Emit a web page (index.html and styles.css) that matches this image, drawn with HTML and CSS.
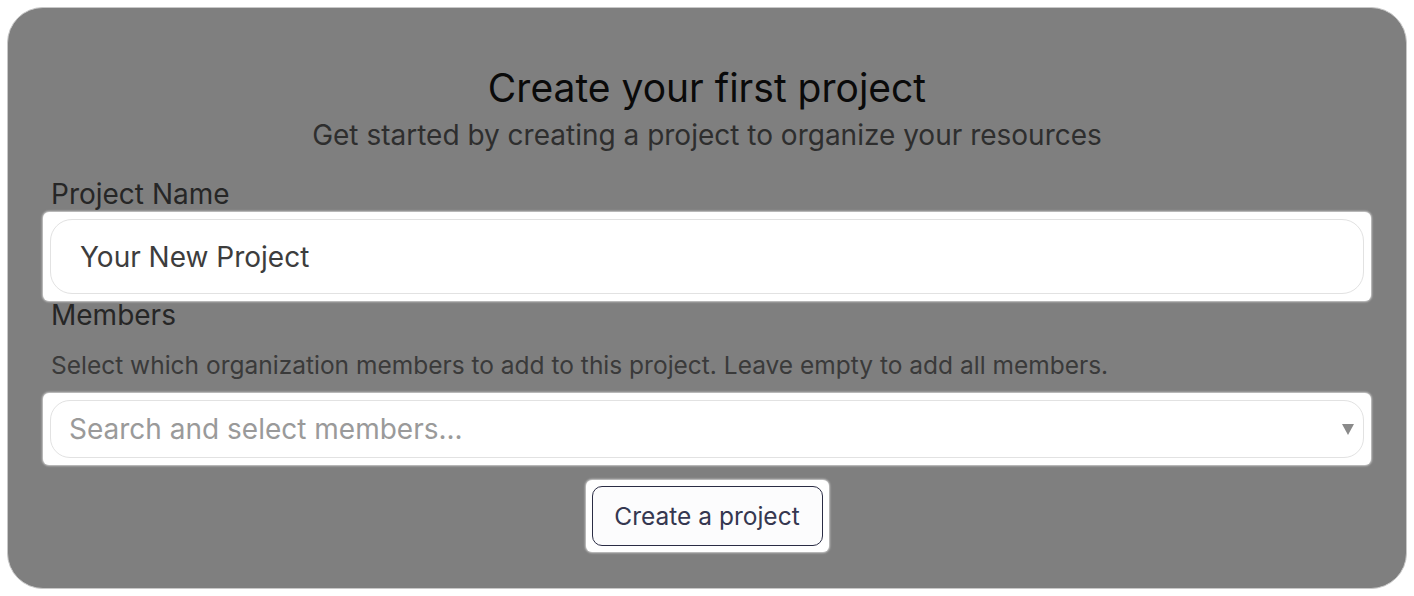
FILE: index.html
```html
<!DOCTYPE html>
<html lang="en">
<head>
<meta charset="utf-8">
<title>Create your first project</title>
<link rel="stylesheet" href="styles.css">
</head>
<body>
<div class="card">
  <div class="head">
    <h1 class="title">Create your first project</h1>
    <p class="subtitle">Get started by creating a project to organize your resources</p>
  </div>
  <div class="form">
    <label class="label">Project Name</label>
    <div class="hl hl-input">
      <div class="input">Your New Project</div>
    </div>
    <label class="label label-members">Members</label>
    <p class="desc">Select which organization members to add to this project. Leave empty to add all members.</p>
    <div class="hl hl-select">
      <div class="select">
        <span class="placeholder">Search and select members...</span>
        <span class="caret"></span>
      </div>
    </div>
    <div class="actions">
      <div class="hl hl-btn">
        <button class="btn">Create a project</button>
      </div>
    </div>
  </div>
</div>
</body>
</html>
```

FILE: styles.css
```css
* { box-sizing: border-box; }
html, body { margin: 0; padding: 0; background: #ffffff; }
body {
  font-family: Inter, "Noto Sans", "Liberation Sans", sans-serif;
  padding: 7px;
  width: 1414px;
  height: 596px;
}
.card {
  width: 1400px;
  height: 582px;
  background: #7f7f7f;
  border: 1px solid #c8c8c8;
  border-radius: 36px;
  padding: 56px 42px 0 42px;
}
.head { text-align: center; }
.title {
  margin: 0;
  font-size: 39px;
  line-height: 48px;
  font-weight: 400;
  color: #0a0a0a;
}
.subtitle {
  margin: 2px 0 0;
  font-size: 28px;
  line-height: 42px;
  color: #2e2e2e;
}
.form {
  display: flex;
  flex-direction: column;
  margin-top: 17px;
}
.label {
  display: block;
  font-size: 28px;
  line-height: 42px;
  color: #262626;
  padding-left: 1px;
}
.hl {
  position: relative;
  z-index: 0;
  background: #ffffff;
  border-radius: 6px;
  padding: 7px;
  margin: -7px;
  box-shadow: 0 0 2px 1px rgba(255,255,255,0.6);
}
.hl-input { margin-top: -3px; }
.input {
  height: 75px;
  border: 1px solid #e2e2e2;
  border-radius: 22px;
  padding: 0 29px;
  display: flex;
  align-items: center;
  font-size: 28px;
  color: #3d3d3d;
}
.label-members { position: relative; z-index: 1; }
.desc {
  margin: 11px 0 0;
  padding-left: 1px;
  font-size: 24.5px;
  line-height: 36.75px;
  color: #3a3a3a;
}
.hl-select { margin-top: 9px; }
.select {
  height: 58px;
  border: 1px solid #e2e2e2;
  border-radius: 20px;
  padding: 0 9px 0 18px;
  display: flex;
  align-items: center;
  justify-content: space-between;
}
.placeholder {
  font-size: 28px;
  color: #9a9a9a;
}
.caret {
  width: 0; height: 0;
  border-left: 6.5px solid transparent;
  border-right: 6.5px solid transparent;
  border-top: 11px solid #8a8a8a;
  margin-top: 1px;
}
.actions {
  display: flex;
  justify-content: center;
  margin-top: 22px;
}
.hl-btn { padding: 6px; margin: 0; }
.btn {
  width: 231px;
  height: 60px;
  border: 1px solid #2b2d45;
  border-radius: 10px;
  background: #fcfcfd;
  font-family: Inter, "Noto Sans", "Liberation Sans", sans-serif;
  font-size: 24.5px;
  color: #353750;
  padding: 0;
}
```
